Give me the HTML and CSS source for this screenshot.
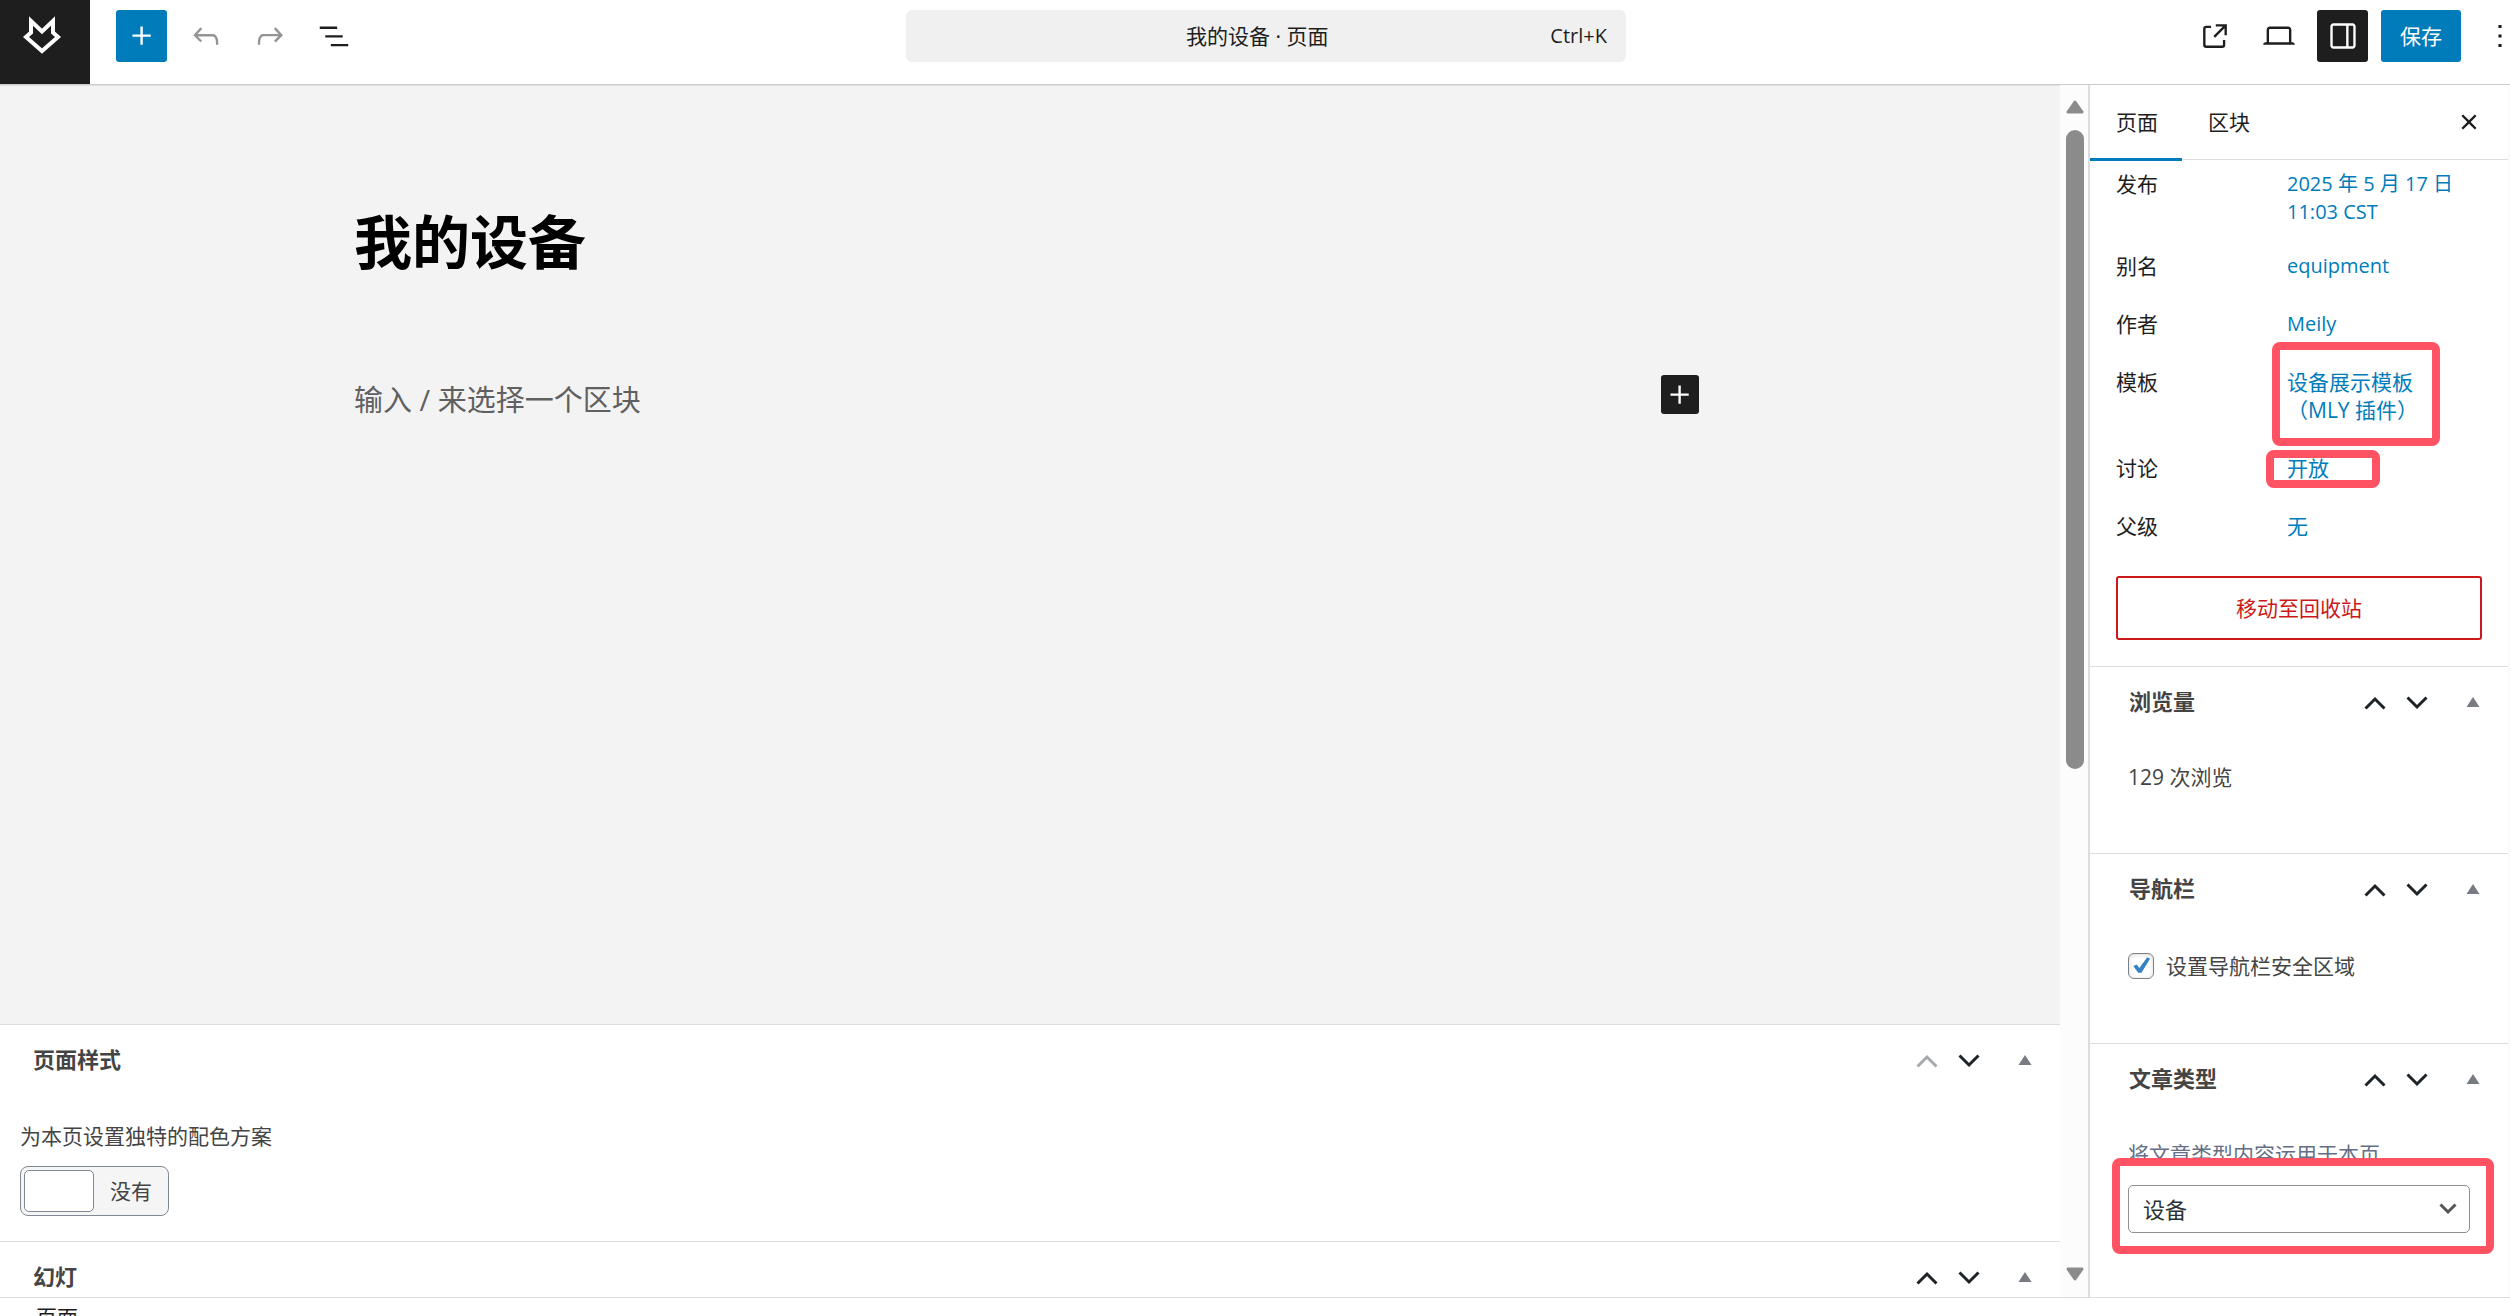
FILE: index.html
```html
<!DOCTYPE html>
<html lang="zh-CN">
<head>
    <meta charset="UTF-8">
    <meta name="viewport" content="width=device-width, initial-scale=1.0">
    <title>编辑页面 我的设备</title>
    <link rel="stylesheet" href="styles.css">
</head>
<body>
    <!-- 共用图标 -->
    <svg class="sprite" aria-hidden="true">
        <symbol id="i-plus" viewBox="0 0 24 24"><path d="M11 12.5V17.5H12.5V12.5H17.5V11H12.5V6H11V11H6V12.5H11Z"/></symbol>
        <symbol id="i-up" viewBox="0 0 22 14"><path d="M1.5 12.5 11 3l9.500 9.500" fill="none" stroke="currentColor" stroke-width="3"/></symbol>
        <symbol id="i-down" viewBox="0 0 22 14"><path d="M1.500 1.500 11 11l9.500-9.500" fill="none" stroke="currentColor" stroke-width="3"/></symbol>
        <symbol id="i-toggle" viewBox="0 0 14 10"><path d="M7 0 13.500 10H.500z"/></symbol>
    </svg>

    <!-- 顶部工具栏 -->
    <header class="header">
        <a class="logo" href="#" aria-label="返回">
            <svg viewBox="0 0 38 38"><path d="M8 5 19 15.500 30 5V16.500L35 21 19 35 3 21 8 16.500Z"/></svg>
        </a>
        <div class="tools">
            <button class="icon-btn primary" aria-label="插入区块"><svg><use href="#i-plus"/></svg></button>
            <button class="icon-btn" aria-label="撤销" disabled><svg viewBox="0 0 24 24"><path d="M18.3 11.7c-.6-.6-1.4-.9-2.300-.9H6.700l2.900-3.300-1.100-1-4.500 5L8.500 16l1-1-2.700-2.700H16c.5 0 .9.2 1.300.5 1 1 1 3.400 1 4.500v.3h1.500v-.2c0-1.500 0-4.300-1.500-5.700z"/></svg></button>
            <button class="icon-btn" aria-label="重做" disabled><svg viewBox="0 0 24 24"><path d="M15.600 6.500l-1.100 1 2.900 3.300H8c-.9 0-1.700.3-2.300.9-1.400 1.500-1.400 4.200-1.400 5.600v.2h1.500v-.3c0-1.100 0-3.500 1-4.500.3-.3.7-.5 1.300-.5h9.200L14.500 15l1.100 1.100 4.600-4.600-4.600-5z"/></svg></button>
            <button class="icon-btn" aria-label="文档概览"><svg viewBox="0 0 24 24"><path d="M3 6h11v1.500H3V6Zm3.500 5.500h11V13h-11v-1.500ZM21 17H10v1.500h11V17Z"/></svg></button>
        </div>
        <button class="command">
            <span class="command-title">我的设备 · 页面</span>
            <span class="command-key">Ctrl+K</span>
        </button>
        <div class="tools tools-right">
            <a class="icon-btn" href="#" aria-label="查看页面"><svg viewBox="0 0 24 24"><path d="M19.500 4.500h-7V6h4.440l-5.970 5.970 1.060 1.060L18 7.060v4.440h1.500v-7Zm-13 1a2 2 0 0 0-2 2v10a2 2 0 0 0 2 2h10a2 2 0 0 0 2-2v-3H17v3a.5.5 0 0 1-.5.5h-10a.5.5 0 0 1-.5-.5v-10a.5.5 0 0 1 .5-.5h3V5.500h-3Z"/></svg></a>
            <button class="icon-btn" aria-label="预览"><svg viewBox="0 0 24 24"><path d="M20.500 16h-.7V8c0-1.100-.9-2-2-2H6.200c-1.100 0-2 .9-2 2v8h-.7c-.8 0-1.500.7-1.500 1.500h20c0-.8-.7-1.500-1.500-1.500zM5.700 8c0-.3.2-.5.5-.5h11.600c.3 0 .5.2.5.5v8H5.700V8z"/></svg></button>
            <button class="icon-btn dark" aria-label="设置"><svg viewBox="0 0 24 24"><path d="M18 4H6c-1.100 0-2 .9-2 2v12c0 1.100.9 2 2 2h12c1.100 0 2-.9 2-2V6c0-1.100-.9-2-2-2zm-4 14.500H6c-.3 0-.5-.2-.5-.5V6c0-.3.2-.5.5-.5h8v13zm4.500-.5c0 .3-.2.5-.5.5h-2.500v-13H18c.3 0 .5.2.5.5v12z"/></svg></button>
            <button class="save">保存</button>
            <button class="icon-btn" aria-label="选项"><svg viewBox="0 0 24 24"><path d="M13 19h-2v-2h2v2zm0-6h-2v-2h2v2zm0-6h-2V5h2v2z"/></svg></button>
        </div>
    </header>

    <div class="editor">
        <!-- 编辑区 -->
        <main class="content">
            <div class="canvas">
                <div class="post">
                    <h1 class="post-title">我的设备</h1>
                    <div class="block">
                        <p class="placeholder">输入 / 来选择一个区块</p>
                        <button class="inserter" aria-label="添加区块"><svg><use href="#i-plus"/></svg></button>
                    </div>
                </div>
            </div>
            <div class="metaboxes">
                <section class="metabox">
                    <div class="box-head">
                        <h2>页面样式</h2>
                        <button class="order" aria-label="上移" disabled><svg><use href="#i-up"/></svg></button>
                        <button class="order" aria-label="下移"><svg><use href="#i-down"/></svg></button>
                        <button class="toggle" aria-label="切换面板"><svg><use href="#i-toggle"/></svg></button>
                    </div>
                    <div class="metabox-body">
                        <span id="scheme-label">为本页设置独特的配色方案</span>
                        <button class="switch" role="switch" aria-checked="false" aria-labelledby="scheme-label">
                            <span class="switch-knob"></span>
                            <span class="switch-text">没有</span>
                        </button>
                    </div>
                </section>
                <section class="metabox">
                    <div class="box-head">
                        <h2>幻灯</h2>
                        <button class="order" aria-label="上移"><svg><use href="#i-up"/></svg></button>
                        <button class="order" aria-label="下移"><svg><use href="#i-down"/></svg></button>
                        <button class="toggle" aria-label="切换面板"><svg><use href="#i-toggle"/></svg></button>
                    </div>
                </section>
            </div>
        </main>

        <!-- 滚动条 -->
        <div class="scrollbar" aria-hidden="true">
            <svg viewBox="0 0 18 14"><path d="M9 2 16 12H2z"/></svg>
            <div class="scroll-track"><div class="scroll-thumb"></div></div>
            <svg viewBox="0 0 18 14"><path d="M9 12 16 2H2z"/></svg>
        </div>

        <!-- 侧边栏 -->
        <aside class="sidebar">
            <div class="tabs">
                <button class="tab active">页面</button>
                <button class="tab">区块</button>
                <button class="close" aria-label="关闭设置"><svg viewBox="0 0 24 24"><path d="M12 13.060l3.712 3.713 1.061-1.060L13.061 12l3.712-3.712-1.060-1.060L12 10.938 8.288 7.227l-1.061 1.060L10.939 12l-3.712 3.712 1.060 1.061L12 13.061z"/></svg></button>
            </div>

            <div class="summary">
                <div class="row">
                    <span>发布</span>
                    <div class="value latin"><a href="#">2025 年 5 月 17 日<br>11:03 CST</a></div>
                </div>
                <div class="row">
                    <span>别名</span>
                    <div class="value latin"><a href="#">equipment</a></div>
                </div>
                <div class="row">
                    <span>作者</span>
                    <div class="value latin"><a href="#">Meily</a></div>
                </div>
                <div class="row">
                    <span>模板</span>
                    <div class="value"><a href="#">设备展示模板<br>（MLY 插件）</a><i class="mark mark-template"></i></div>
                </div>
                <div class="row">
                    <span>讨论</span>
                    <div class="value"><a href="#">开放</a><i class="mark mark-discussion"></i></div>
                </div>
                <div class="row">
                    <span>父级</span>
                    <div class="value"><a href="#">无</a></div>
                </div>
                <button class="trash">移动至回收站</button>
            </div>

            <section class="panel">
                <div class="box-head">
                    <h2>浏览量</h2>
                    <button class="order" aria-label="上移"><svg><use href="#i-up"/></svg></button>
                    <button class="order" aria-label="下移"><svg><use href="#i-down"/></svg></button>
                    <button class="toggle" aria-label="切换面板"><svg><use href="#i-toggle"/></svg></button>
                </div>
                <div class="panel-body">
                    <p>129 次浏览</p>
                </div>
            </section>

            <section class="panel">
                <div class="box-head">
                    <h2>导航栏</h2>
                    <button class="order" aria-label="上移"><svg><use href="#i-up"/></svg></button>
                    <button class="order" aria-label="下移"><svg><use href="#i-down"/></svg></button>
                    <button class="toggle" aria-label="切换面板"><svg><use href="#i-toggle"/></svg></button>
                </div>
                <div class="panel-body">
                    <label class="check"><input type="checkbox" checked>设置导航栏安全区域</label>
                </div>
            </section>

            <section class="panel">
                <div class="box-head">
                    <h2>文章类型</h2>
                    <button class="order" aria-label="上移"><svg><use href="#i-up"/></svg></button>
                    <button class="order" aria-label="下移"><svg><use href="#i-down"/></svg></button>
                    <button class="toggle" aria-label="切换面板"><svg><use href="#i-toggle"/></svg></button>
                </div>
                <div class="panel-body">
                    <label class="hint" for="post-type">将文章类型内容运用于本页。</label>
                    <div class="select-wrap">
                        <select id="post-type">
                            <option>设备</option>
                        </select>
                        <svg viewBox="0 0 18 12"><path d="M1.500 1.500 9 9l7.500-7.500"/></svg>
                        <i class="mark mark-type"></i>
                    </div>
                </div>
            </section>
        </aside>
    </div>

    <footer class="footer">页面</footer>
</body>
</html>
```
FILE: styles.css
```css
* {
    box-sizing: border-box;
}

body {
    margin: 0;
    height: 100vh;
    display: flex;
    flex-direction: column;
    overflow: hidden;
    background: #fff;
    color: #1e1e1e;
    font-family: "Open Sans", "Noto Sans CJK SC", sans-serif;
    font-size: 21px;
    line-height: 28px;
}

h1, h2, p {
    margin: 0;
}

button, select {
    margin: 0;
    padding: 0;
    border: none;
    background: none;
    color: inherit;
    font: inherit;
    cursor: pointer;
}

a {
    color: #007cba;
    text-decoration: none;
}

svg {
    display: block;
    fill: currentColor;
}

.sprite {
    display: none;
}

/* 顶部工具栏 */
.header {
    flex: none;
    display: grid;
    grid-template-columns: 90px 12fr 720px 13fr;
    height: 85px;
    border-bottom: 1px solid #ccc;
}

.logo {
    padding: 16px 23px;
    background: #1e1e1e;
}

.logo svg {
    width: 38px;
    height: 38px;
    fill: none;
    stroke: #fff;
    stroke-width: 4;
}

.tools {
    display: flex;
    gap: 13px;
    padding: 10px 0 0 26px;
}

/* 最右侧的按钮超出窗口 */
.tools-right {
    justify-content: flex-end;
    margin-right: -15px;
}

.icon-btn {
    flex: none;
    display: flex;
    align-items: center;
    justify-content: center;
    width: 51px;
    height: 52px;
    border-radius: 3px;
    color: #1e1e1e;
}

.icon-btn svg {
    width: 38px;
    height: 38px;
}

.icon-btn:disabled {
    color: #949494;
}

.icon-btn.primary {
    background: #007cba;
    color: #fff;
}

.icon-btn.dark {
    background: #1e1e1e;
    color: #fff;
}

.save {
    width: 80px;
    height: 52px;
    border-radius: 3px;
    background: #007cba;
    color: #fff;
}

.command {
    display: flex;
    align-items: center;
    height: 52px;
    margin-top: 10px;
    padding: 0 19px 0 58px;
    border-radius: 6px;
    background: #f0f0f0;
}

.command-title {
    flex: 1;
}

.command-key {
    font-size: 20px;
}

/* 主体 */
.editor {
    flex: 1;
    min-height: 0;
    display: flex;
}

.content {
    flex: 1;
    min-width: 0;
    display: flex;
    flex-direction: column;
}

.canvas {
    flex: 1;
    border-top: 1px solid #e0e0e0;
    background: #f3f3f3;
}

.post {
    max-width: 1352px;
    margin: 0 auto;
    padding-top: 116px;
}

.post-title {
    color: #000;
    font-size: 58px;
    font-weight: 700;
    line-height: 80px;
}

.block {
    display: flex;
    align-items: flex-start;
    justify-content: space-between;
    margin-top: 93px;
    padding-right: 7px;
}

.placeholder {
    color: #606060;
    font-size: 29px;
    line-height: 50px;
}

.inserter {
    display: flex;
    align-items: center;
    justify-content: center;
    width: 38px;
    height: 39px;
    border-radius: 3px;
    background: #1e1e1e;
    color: #fff;
}

.inserter svg {
    width: 38px;
    height: 38px;
}

/* 编辑区下方面板 */
.metaboxes {
    flex: none;
    max-height: 273px;
    overflow: hidden;
}

.metabox {
    border-top: 1px solid #ddd;
    color: #444;
}

.box-head {
    display: flex;
    align-items: center;
    height: 72px;
    padding: 0 25px 0 33px;
    color: #444;
}

.box-head h2 {
    flex: 1;
    padding-bottom: 4px;
    font-size: 22px;
    font-weight: 700;
}

.order {
    width: 42px;
    padding: 0 10px;
    color: #1d2327;
}

.order:disabled {
    color: #a7aaad;
}

.order svg {
    width: 22px;
    height: 14px;
}

.toggle {
    margin-left: 25px;
    padding: 3px 3px 5px;
    color: #787c82;
}

.toggle svg {
    width: 14px;
    height: 10px;
}

.metabox-body {
    display: flex;
    flex-direction: column;
    align-items: flex-start;
    gap: 16px;
    padding: 25px 20px;
}

.switch {
    display: flex;
    align-items: center;
    height: 50px;
    padding: 0 16px 0 3px;
    border: 1px solid #7e8993;
    border-radius: 8px;
    background: #f5f5f5;
}

.switch-knob {
    width: 70px;
    height: 42px;
    margin-right: 16px;
    border: 1px solid #7e8993;
    border-radius: 5px;
    background: #fff;
}

/* 滚动条 */
.scrollbar {
    flex: none;
    display: flex;
    flex-direction: column;
    align-items: center;
    gap: 16px;
    width: 28px;
    padding: 15px 0 16px 2px;
    background: #fcfcfc;
}

.scrollbar svg {
    width: 18px;
    height: 14px;
    fill: #8b8b8b;
    stroke: #8b8b8b;
    stroke-width: 3;
    stroke-linejoin: round;
}

.scroll-track {
    flex: 1;
}

.scroll-thumb {
    width: 18px;
    height: 57%;
    border-radius: 9px;
    background: #8b8b8b;
}

/* 侧边栏 */
.sidebar {
    flex: none;
    width: 422px;
    border-left: 2px solid #ddd;
    border-right: 2px solid #fafafa;
}

.tabs {
    display: flex;
    height: 75px;
    border-bottom: 1px solid #ddd;
}

.tab {
    height: 76px;
    padding: 0 24px 0 26px;
    border-bottom: 3px solid transparent;
}

.tab.active {
    border-bottom-color: #007cba;
}

.close {
    margin-left: auto;
    padding-right: 20px;
}

.close svg {
    width: 38px;
    height: 38px;
}

.summary {
    display: flex;
    flex-direction: column;
    gap: 6px;
    padding: 0 26px;
}

.row {
    display: grid;
    grid-template-columns: 171px 1fr;
}

.row span,
.value {
    padding: 12px 0;
}

.row:first-child span,
.row:first-child .value {
    padding: 10px 0 8px;
}

.value {
    position: relative;
}

.latin {
    font-size: 20px;
}

.trash {
    height: 64px;
    margin: 18px 0 26px;
    border: 2px solid #cc1818;
    border-radius: 3px;
    color: #cc1818;
}

.panel {
    border-top: 1px solid #ddd;
    color: #444;
}

.panel .box-head {
    padding-left: 39px;
}

.panel-body {
    padding: 24px 38px 62px;
}

.check {
    display: flex;
    align-items: center;
    gap: 12px;
    height: 31px;
}

.check input {
    appearance: none;
    display: grid;
    width: 26px;
    height: 26px;
    margin: 0;
    border: 1px solid #7c7f84;
    border-radius: 6px;
    background: #fff;
    box-shadow: inset 0 1px 4px rgba(0, 0, 0, 0.15);
}

.check input:checked::before {
    content: "";
    background: #3582c4;
    clip-path: polygon(18% 52%, 32% 46%, 43% 60%, 76% 16%, 88% 22%, 52% 80%, 38% 80%);
}

.hint {
    display: block;
    color: #646f85;
}

.select-wrap {
    position: relative;
    display: grid;
    align-items: center;
    margin-top: 17px;
}

.select-wrap select,
.select-wrap svg {
    grid-area: 1 / 1;
}

.select-wrap select {
    appearance: none;
    height: 48px;
    padding: 0 14px;
    border: 1px solid #8c8f94;
    border-radius: 5px;
    background: #fff;
    color: #2c3338;
    font-size: 22px;
}

.select-wrap svg {
    justify-self: end;
    width: 18px;
    height: 12px;
    margin-right: 13px;
    fill: none;
    stroke: #555;
    stroke-width: 3;
    pointer-events: none;
}

/* 红色标注框 */
.mark {
    position: absolute;
    z-index: 2;
    border: 8px solid #ff5262;
    border-radius: 8px;
    pointer-events: none;
}

.mark-template {
    inset: -14px 42px -10px -15px;
}

.mark-discussion {
    inset: 8px 102px 6px -21px;
}

.mark-type {
    inset: -27px -24px -21px -16px;
}

/* 底部路径 */
.footer {
    flex: none;
    height: 19px;
    padding-left: 36px;
    overflow: hidden;
    border-top: 1px solid #ddd;
    line-height: 38px;
}
```
